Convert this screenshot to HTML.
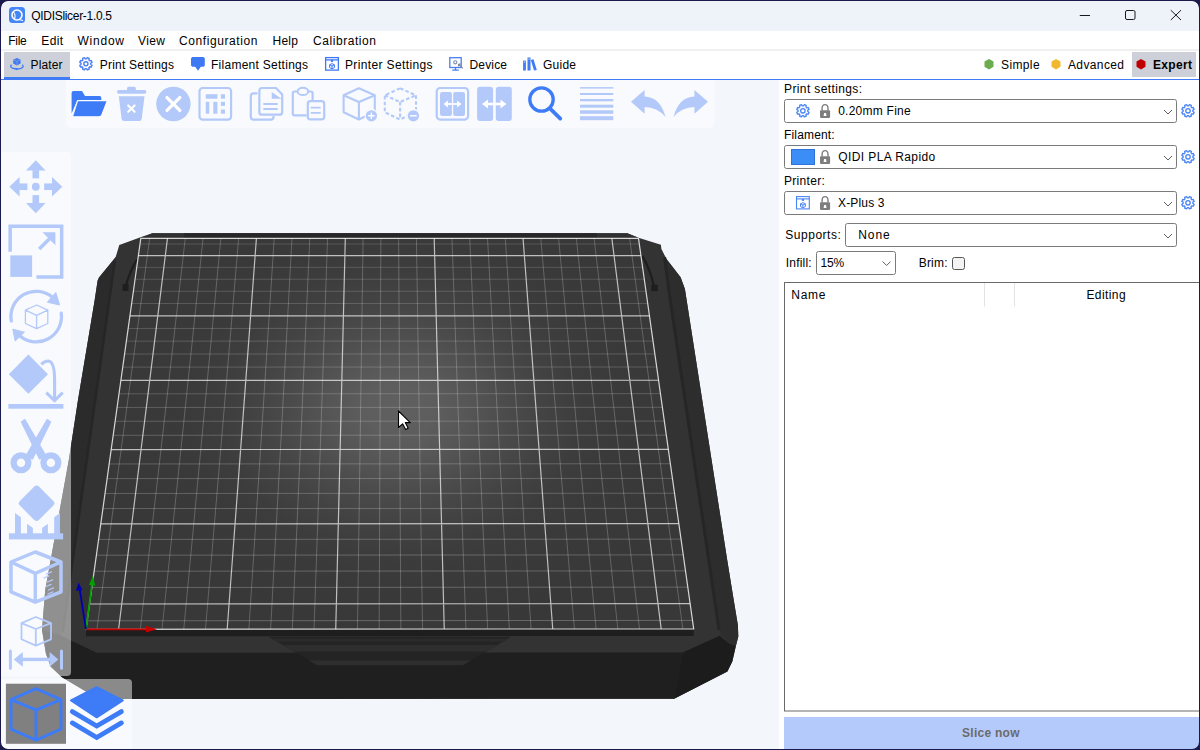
<!DOCTYPE html>
<html><head><meta charset="utf-8"><style>
html,body{margin:0;padding:0;width:1200px;height:750px;overflow:hidden;background:#1b1a4c;}
.win{position:absolute;left:1px;top:1px;width:1198px;height:748px;border-radius:7px;overflow:hidden;background:#fff;}
.abs{position:absolute;}
.t{position:absolute;font-family:"Liberation Sans",sans-serif;line-height:12px;white-space:pre;}
svg{position:absolute;left:0;top:0;}
</style></head><body>
<div class="win">
 <div class="abs" style="left:-1px;top:-1px;width:1200px;height:31px;background:#eef2f9"></div>
 <div class="abs" style="left:-1px;top:30px;width:1200px;height:19px;background:#ffffff"></div>
 <div class="abs" style="left:-1px;top:48px;width:1200px;height:2px;background:#f0f0f0"></div>
 <div class="abs" style="left:-1px;top:51px;width:1200px;height:28px;background:#ffffff"></div>
 <div class="abs" style="left:3px;top:51px;width:66px;height:26px;background:#cdd0d8"></div>
 <div class="abs" style="left:1131px;top:51px;width:64px;height:25px;background:#cdd0d8"></div>
 <div class="abs" style="left:-1px;top:78px;width:1200px;height:1px;background:#3f7cf5"></div>
 <div class="abs" style="left:3px;top:76px;width:66px;height:3px;background:#3f7cf5"></div>
 <div class="abs" style="left:-1px;top:79px;width:779px;height:670px;background:#f3f6fb"></div>
 <div class="abs" style="left:778px;top:79px;width:421px;height:670px;background:#ffffff"></div>
</div>
<svg width="1200" height="750" viewBox="0 0 1200 750">
<defs><radialGradient id="bedg" gradientUnits="userSpaceOnUse" cx="0" cy="0" r="1" gradientTransform="translate(400 410) scale(360 280)"><stop offset="0.0" stop-color="#606060"/><stop offset="0.1" stop-color="#5d5d5d"/><stop offset="0.2" stop-color="#555555"/><stop offset="0.3" stop-color="#4b4b4b"/><stop offset="0.4" stop-color="#434343"/><stop offset="0.5" stop-color="#3d3d3d"/><stop offset="0.6" stop-color="#3a3a3a"/><stop offset="0.7" stop-color="#393939"/><stop offset="0.8" stop-color="#383838"/><stop offset="0.9" stop-color="#383838"/><stop offset="1.0" stop-color="#383838"/></radialGradient><clipPath id="notchclip"><polygon points="268.7,636.8 511.3,636.8 462.3,665.5 317.7,665.5"/></clipPath></defs>
<polygon points="152.4,233.3 627.3,233.3 638.5,237.8 660.9,244.7 661.4,249.0 665.7,258.0 680.6,277.2 684.9,289.0 727.2,560.0 733.7,600.0 737.9,625.2 738.3,636.4 735.8,646.2 732.3,661.6 727.4,671.4 674.2,698.7 98.6,699.0 62.0,677.2 50.8,666.8 46.0,654.0 42.0,630.0 45.2,590.0 68.8,460.0 78.0,400.0 94.7,300.0 97.6,280.8 99.0,277.6 115.6,257.3 119.3,245.0 141.2,237.0" fill="#333333"/>
<polygon points="152.4,233.3 627.3,233.3 638.5,237.8 141.2,237.8" fill="#303030"/><rect x="184" y="233.3" width="413" height="4.5" fill="#272727"/>
<polygon points="115.6,257.3 99.0,277.6 97.6,280.8 94.7,300.0 78.0,400.0 68.8,460.0 45.2,590.0 42.0,630.0 48.0,644.0 60.4,636.0 116.2,257.3" fill="#2b2b2b"/>
<polyline points="114.6,262 62.6,632" stroke="#262626" stroke-width="2.5" fill="none"/>
<polygon points="661.4,249.0 665.7,258.0 680.6,277.2 684.9,289.0 727.2,560.0 733.7,600.0 737.9,625.2 738.3,636.4 735.8,646.2 728.8,643.4 720.4,633.6 707.4,560.0 667.8,290.0 664.6,257.0" fill="#2d2d2d"/>
<polyline points="664.6,257 668.8,290 708.8,560 719,630" stroke="#262626" stroke-width="3" fill="none"/>
<polygon points="42.0,630.0 60.4,635.6 96.7,652.7 682.6,652.5 674.2,698.7 98.6,699.0 62.0,677.2 50.8,666.8 46.0,654.0" fill="#1f1f1f"/>
<polygon points="682.6,652.5 719.7,635.7 728.8,643.4 735.8,646.2 732.3,661.6 727.4,671.4 674.2,698.7" fill="#1c1c1c"/>
<polygon points="268.7,636.8 511.3,636.8 462.3,665.5 317.7,665.5" fill="#242424"/>
<g clip-path="url(#notchclip)"><rect x="260" y="638.7" width="260" height="2.8" fill="#2b2b2b"/><rect x="260" y="645" width="260" height="6.5" fill="#2e2e2e"/><rect x="260" y="660.5" width="260" height="5" fill="#2e2e2e"/></g>
<path d="M137.4,259.4 Q131,268 125.7,286" stroke="#1e1e1e" stroke-width="2.2" fill="none"/><rect x="122.5" y="284" width="6" height="7" fill="#1e1e1e"/>
<path d="M642.2,255.9 Q649.7,268 654,286" stroke="#1e1e1e" stroke-width="2.2" fill="none"/><rect x="651.3" y="284.7" width="6.4" height="6.4" fill="#1e1e1e"/>
<polygon points="86,629.3 693.7,628.9 693.7,636 86,636.2" fill="#1e1e1e"/>
<polygon points="86.0,629.3 693.7,628.9 638.5,238.3 140.8,238.3" fill="url(#bedg)"/>
<path d="M96.86,629.29L149.69,238.30M140.31,629.26L185.27,238.30M162.03,629.25L203.06,238.30M183.75,629.24L220.84,238.30M205.47,629.22L238.63,238.30M248.90,629.19L274.19,238.30M270.61,629.18L291.98,238.30M292.32,629.16L309.76,238.30M314.03,629.15L327.54,238.30M357.45,629.12L363.09,238.30M379.15,629.11L380.87,238.30M400.86,629.09L398.64,238.30M422.56,629.08L416.42,238.30M465.96,629.05L451.96,238.30M487.66,629.04L469.73,238.30M509.35,629.02L487.50,238.30M531.05,629.01L505.27,238.30M574.43,628.98L540.80,238.30M596.12,628.96L558.57,238.30M617.81,628.95L576.33,238.30M639.49,628.94L594.10,238.30M682.86,628.91L629.62,238.30" stroke="#ffffff" stroke-opacity="0.22" stroke-width="1" fill="none"/>
<path d="M87.19,620.81L692.50,620.42" stroke="#fff" stroke-opacity="0.238" stroke-width="1"/><path d="M91.86,587.49L687.80,587.14" stroke="#fff" stroke-opacity="0.232" stroke-width="1"/><path d="M94.14,571.22L685.50,570.89" stroke="#fff" stroke-opacity="0.229" stroke-width="1"/><path d="M96.39,555.20L683.24,554.89" stroke="#fff" stroke-opacity="0.226" stroke-width="1"/><path d="M98.60,539.42L681.01,539.12" stroke="#fff" stroke-opacity="0.222" stroke-width="1"/><path d="M102.92,508.56L676.66,508.30" stroke="#fff" stroke-opacity="0.216" stroke-width="1"/><path d="M105.04,493.47L674.53,493.23" stroke="#fff" stroke-opacity="0.213" stroke-width="1"/><path d="M107.12,478.61L672.43,478.38" stroke="#fff" stroke-opacity="0.209" stroke-width="1"/><path d="M109.17,463.96L670.36,463.75" stroke="#fff" stroke-opacity="0.206" stroke-width="1"/><path d="M113.19,435.30L666.31,435.12" stroke="#fff" stroke-opacity="0.200" stroke-width="1"/><path d="M115.16,421.27L664.33,421.10" stroke="#fff" stroke-opacity="0.197" stroke-width="1"/><path d="M117.09,407.45L662.38,407.29" stroke="#fff" stroke-opacity="0.193" stroke-width="1"/><path d="M119.00,393.82L660.46,393.67" stroke="#fff" stroke-opacity="0.190" stroke-width="1"/><path d="M122.75,367.12L656.69,367.01" stroke="#fff" stroke-opacity="0.184" stroke-width="1"/><path d="M124.58,354.05L654.84,353.95" stroke="#fff" stroke-opacity="0.181" stroke-width="1"/><path d="M126.38,341.16L653.02,341.07" stroke="#fff" stroke-opacity="0.177" stroke-width="1"/><path d="M128.17,328.44L651.23,328.36" stroke="#fff" stroke-opacity="0.174" stroke-width="1"/><path d="M131.66,303.52L647.71,303.46" stroke="#fff" stroke-opacity="0.168" stroke-width="1"/><path d="M133.37,291.30L645.98,291.26" stroke="#fff" stroke-opacity="0.164" stroke-width="1"/><path d="M135.06,279.25L644.28,279.22" stroke="#fff" stroke-opacity="0.161" stroke-width="1"/><path d="M136.73,267.36L642.60,267.33" stroke="#fff" stroke-opacity="0.158" stroke-width="1"/><path d="M140.00,244.04L639.31,244.03" stroke="#fff" stroke-opacity="0.152" stroke-width="1"/>
<path d="M118.59,629.28L167.48,238.30M89.54,604.02L690.13,603.65M227.18,629.21L256.41,238.30M100.78,523.87L678.82,523.59M335.74,629.14L345.31,238.30M111.20,449.53L668.32,449.33M444.26,629.06L434.19,238.30M120.89,380.38L658.56,380.25M552.74,628.99L523.04,238.30M129.93,315.89L649.46,315.82M661.18,628.92L611.86,238.30M138.37,255.62L640.95,255.61" stroke="#ffffff" stroke-opacity="0.68" stroke-width="1.2" fill="none"/>
<polygon points="86.0,629.3 693.7,628.9 638.5,238.3 140.8,238.3" fill="none" stroke="#ffffff" stroke-opacity="0.8" stroke-width="1.2"/>
<line x1="86" y1="629.3" x2="150" y2="629.3" stroke="#c80000" stroke-width="1.8"/><polygon points="146,626 157,629.3 146,632.6" fill="#c80000"/>
<line x1="86" y1="629.3" x2="92" y2="584" stroke="#00a000" stroke-width="1.7"/><polygon points="89,585 93,575.5 95.3,585.8" fill="#00a000"/>
<line x1="86" y1="629.3" x2="79.8" y2="590" stroke="#0000b0" stroke-width="1.8"/><polygon points="76,591 78.5,582.5 82.5,590" fill="#0000b0"/>
<path d="M398.5,411 L398.5,427.5 L402.6,423.8 L405.6,429.6 L408.2,428.3 L405.3,422.6 L410.3,422.6 Z" fill="#fff" stroke="#000" stroke-width="1.1" stroke-linejoin="round"/>
<path d="M66,80 H714.5 V121.5 Q714.5,128 708,128 H72 Q66,128 66,121.5 Z" fill="#ffffff" fill-opacity="0.48"/>
<path d="M0,152 H67 Q71,152 71,156 V672 Q71,676 67,676 H0 Z" fill="#ffffff" fill-opacity="0.48"/>
<path d="M0,679 H128 Q132,679 132,683 V750 H0 Z" fill="#ffffff" fill-opacity="0.48"/>
<path d="M71.6,93 Q71.6,91 73.6,91 H82 L85,96 H99.5 Q101.3,96 101.3,97.8 V100.5 H77.2 L71.6,113.5 Z" fill="#3e7bf6"/>
<path d="M77.6,100.6 H107.3 L101.9,114.6 Q101.2,116.8 99,116.8 H72.4 Z" fill="#3e7bf6" stroke="#fafbfe" stroke-width="1.1"/>
<rect x="127" y="86.7" width="8.8" height="4" rx="1.5" fill="#b3c9f9"/><rect x="117" y="90" width="29.3" height="3.8" rx="1.8" fill="#b3c9f9"/>
<path d="M118.8,96.2 H144.5 L141.7,118.8 Q141.4,121 139.2,121 H124.1 Q121.9,121 121.6,118.8 Z" fill="#b3c9f9"/>
<path d="M128.2,105.4 L134.6,111.8 M134.6,105.4 L128.2,111.8" stroke="#fff" stroke-width="2.1" stroke-linecap="round"/>
<circle cx="173.4" cy="104" r="17.2" fill="#b3c9f9"/>
<path d="M167,97.6 L179.8,110.4 M179.8,97.6 L167,110.4" stroke="#fff" stroke-width="3.3" stroke-linecap="round"/>
<rect x="199.5" y="88" width="31.6" height="31.6" rx="3.2" fill="none" stroke="#b3c9f9" stroke-width="2.2"/>
<rect x="205.75" y="94.25" width="11.65" height="4.45" fill="#b3c9f9"/><rect x="220.9" y="94.25" width="4.1" height="4.45" fill="#b3c9f9"/><rect x="205.75" y="101.8" width="3.5" height="11.9" fill="#b3c9f9"/><rect x="213.3" y="101.8" width="4.1" height="11.9" fill="#b3c9f9"/><rect x="220.9" y="101.8" width="4.1" height="4.1" fill="#b3c9f9"/><rect x="220.9" y="109.5" width="4.1" height="4.2" fill="#b3c9f9"/>
<path d="M257.5,93.4 H253.5 Q250.8,93.4 250.8,96.2 V116.8 Q250.8,119.6 253.5,119.6 H270.8 Q273.5,119.6 273.5,116.8 V116" fill="none" stroke="#b3c9f9" stroke-width="2.2"/>
<path d="M262,88 H276 L282.2,94.4 V111.9 Q282.2,114.7 279.4,114.7 H262 Q259.35,114.7 259.35,111.9 V90.8 Q259.35,88 262,88 Z" fill="none" stroke="#b3c9f9" stroke-width="2.2"/>
<polygon points="271.7,91.9 281.6,98.8 271.7,98.8" fill="#b3c9f9"/>
<path d="M263.3,104 H277.7 M263.3,109 H277.7" stroke="#b3c9f9" stroke-width="1.8"/>
<path d="M307,91.5 H310.9 Q312.6,91.5 312.6,93.3 V100 M306.7,115.3 H294.6 Q292.8,115.3 292.8,113.5 V93.3 Q292.8,91.5 294.6,91.5 H298.5" fill="none" stroke="#b3c9f9" stroke-width="2.2"/>
<ellipse cx="302.9" cy="91.4" rx="5.3" ry="3.6" fill="#f9fafd" stroke="#b3c9f9" stroke-width="2"/>
<rect x="307.8" y="101.1" width="16.4" height="18.3" rx="2.6" fill="#f9fafd" stroke="#b3c9f9" stroke-width="2.2"/>
<path d="M310.75,107.7 H320.7 M310.75,112.9 H320.7" stroke="#b3c9f9" stroke-width="1.8"/>
<path d="M358.9,88.3 L374.8,95.3 V111.8 L358.9,119.5 L343.6,112.3 V95.3 Z" fill="none" stroke="#b3c9f9" stroke-width="2.1" stroke-linejoin="round"/><path d="M343.6,95.3 L358.9,102 L374.8,95.3 M358.9,102 V119" fill="none" stroke="#b3c9f9" stroke-width="2.1"/>
<path d="M400.09999999999997,88.3 L416.0,95.3 V111.8 L400.09999999999997,119.5 L384.8,112.3 V95.3 Z" fill="none" stroke="#b3c9f9" stroke-width="2.1" stroke-linejoin="round" stroke-dasharray="3.6 2.2"/><path d="M384.8,95.3 L400.09999999999997,102 L416.0,95.3 M400.09999999999997,102 V119" fill="none" stroke="#b3c9f9" stroke-width="2.1" stroke-dasharray="3.6 2.2"/>
<circle cx="371.4" cy="115.8" r="6.3" fill="#b3c9f9" stroke="#f9fafd" stroke-width="1.3"/><path d="M368.1,115.8 H374.7 M371.4,112.5 V119.1" stroke="#fff" stroke-width="1.4"/>
<circle cx="413.4" cy="115.8" r="6.3" fill="#b3c9f9" stroke="#f9fafd" stroke-width="1.3"/><path d="M410.1,115.8 H416.7" stroke="#fff" stroke-width="1.4"/>
<rect x="436.7" y="88" width="31.4" height="31.6" rx="3.5" fill="none" stroke="#b3c9f9" stroke-width="2.2"/>
<rect x="440" y="91.9" width="11.9" height="24.1" rx="2.2" fill="#b3c9f9"/><rect x="453.2" y="91.9" width="11.8" height="24.1" rx="2.2" fill="#b3c9f9"/>
<path d="M447.5,104 H457.5" stroke="#fff" stroke-width="1.8"/><polygon points="443.5,104 448.0,100.4 448.0,107.6" fill="#fff"/><polygon points="461.5,104 457.0,100.4 457.0,107.6" fill="#fff"/>
<rect x="477.1" y="86.7" width="16" height="34.3" rx="3" fill="#b3c9f9"/><rect x="495.8" y="86.7" width="16" height="34.3" rx="3" fill="#b3c9f9"/>
<path d="M487.5,104 H501.0" stroke="#fff" stroke-width="2.6"/><polygon points="482,104 488,99.4 488,108.6" fill="#fff"/><polygon points="506.5,104 500.5,99.4 500.5,108.6" fill="#fff"/>
<circle cx="541.5" cy="99.5" r="11.7" fill="none" stroke="#3e7bf6" stroke-width="3.3"/>
<path d="M549.9,108.4 L560.3,118.6" stroke="#3e7bf6" stroke-width="3.7" stroke-linecap="round"/>
<rect x="580" y="87.1" width="33.3" height="1.5" fill="#b3c9f9"/>
<rect x="580" y="93" width="33.3" height="2" fill="#b3c9f9"/>
<rect x="580" y="99" width="33.3" height="2.3" fill="#b3c9f9"/>
<rect x="580" y="104.7" width="33.3" height="3" fill="#b3c9f9"/>
<rect x="580" y="110.3" width="33.3" height="3.5" fill="#b3c9f9"/>
<rect x="580" y="116.2" width="33.3" height="4" fill="#b3c9f9"/>
<path d="M631,101.8 L644.6,90 V96.5 Q660,96.8 665.6,117 Q657,107 644.6,107 V113.8 Z" fill="#b3c9f9"/>
<path d="M708,101.8 L694.4,90 V96.5 Q679,96.8 673.4,117 Q682,107 694.4,107 V113.8 Z" fill="#b3c9f9"/>
<circle cx="35.8" cy="186.75" r="3.9" fill="#b3c9f9"/>
<g transform="rotate(0 35.8 186.75)"><polygon points="35.8,160.25 45.599999999999994,170.55 25.999999999999996,170.55" fill="#b3c9f9"/><rect x="32.5" y="170.15" width="6.6" height="8.2" fill="#b3c9f9"/></g>
<g transform="rotate(90 35.8 186.75)"><polygon points="35.8,160.25 45.599999999999994,170.55 25.999999999999996,170.55" fill="#b3c9f9"/><rect x="32.5" y="170.15" width="6.6" height="8.2" fill="#b3c9f9"/></g>
<g transform="rotate(180 35.8 186.75)"><polygon points="35.8,160.25 45.599999999999994,170.55 25.999999999999996,170.55" fill="#b3c9f9"/><rect x="32.5" y="170.15" width="6.6" height="8.2" fill="#b3c9f9"/></g>
<g transform="rotate(270 35.8 186.75)"><polygon points="35.8,160.25 45.599999999999994,170.55 25.999999999999996,170.55" fill="#b3c9f9"/><rect x="32.5" y="170.15" width="6.6" height="8.2" fill="#b3c9f9"/></g>
<path d="M10.15,251.7 V226.35 H61.65 V276.95 H36.4" fill="none" stroke="#b3c9f9" stroke-width="3.5"/>
<rect x="10.3" y="255.4" width="21.8" height="21.5" fill="#b3c9f9"/>
<path d="M39.2,249 L49.5,238.7" stroke="#b3c9f9" stroke-width="3.6"/><polygon points="42.5,232.3 55.4,232.3 55.4,245.2" fill="#b3c9f9"/>
<path d="M11.28,320.99 A25.3,25.3 0 0 1 52.46,297.22 M61.25,313.08 A25.3,25.3 0 0 1 19.94,335.98" fill="none" stroke="#b3c9f9" stroke-width="3.3" stroke-linecap="round"/>
<polygon points="59.6,305 55.8,292.6 47.4,302.2" fill="#b3c9f9" stroke="#b3c9f9" stroke-width="1" stroke-linejoin="round"/>
<polygon points="12.8,329.2 24.4,332.2 15.2,341" fill="#b3c9f9" stroke="#b3c9f9" stroke-width="1" stroke-linejoin="round"/>
<path d="M36.6,305 L47.8,310.2 V323.5 L36.6,328.7 L25.4,323.5 V310.2 Z M25.4,310.2 L36.6,315.4 L47.8,310.2 M36.6,315.4 V328.7" fill="none" stroke="#b3c9f9" stroke-width="1.3" stroke-linejoin="round"/>
<polygon points="28.4,354.6 48,374.2 28.4,393.8 8.8,374.2" fill="#b3c9f9"/>
<path d="M41.3,364.3 Q44.5,361 48.3,361 Q54.6,361.5 54.6,380 V399" fill="none" stroke="#b3c9f9" stroke-width="3.1"/>
<path d="M46.3,392.6 L54.5,400.6 L62.7,392.6" fill="none" stroke="#b3c9f9" stroke-width="3.1"/>
<rect x="8.4" y="404" width="55" height="4.7" fill="#b3c9f9"/>
<polygon points="21.4,422 24.8,419.6 45.5,455 39.5,459" fill="#b3c9f9" stroke="#b3c9f9" stroke-width="1.2" stroke-linejoin="round"/>
<polygon points="50.6,422 47.2,419.6 26.5,455 32.5,459" fill="#b3c9f9" stroke="#b3c9f9" stroke-width="1.2" stroke-linejoin="round"/>
<circle cx="21" cy="462.7" r="7.4" fill="none" stroke="#b3c9f9" stroke-width="6.3"/><circle cx="50.9" cy="462.7" r="7.4" fill="none" stroke="#b3c9f9" stroke-width="6.3"/>
<rect x="23.2" y="489.9" width="26.8" height="26.8" rx="3.2" transform="rotate(45 36.6 503.3)" fill="#b3c9f9"/>
<rect x="8.9" y="533.3" width="54.2" height="6.1" fill="#b3c9f9"/>
<polygon points="15,512.9 20.9,517.3 20.9,534 15,534" fill="#b3c9f9"/><polygon points="27.1,523.8 32.9,528.1 32.9,534 27.1,534" fill="#b3c9f9"/><polygon points="42.1,528.1 47.9,523.8 47.9,534 42.1,534" fill="#b3c9f9"/><polygon points="54.2,517.3 60,512.9 60,534 54.2,534" fill="#b3c9f9"/>
<path d="M35.3,552 L61,562 V591.8 L35.3,602.2 L11,591.8 V562 Z M11,562 L35.3,573.3 L61,562 M35.3,573.3 V602" fill="none" stroke="#b3c9f9" stroke-width="3.5" stroke-linejoin="round"/>
<path d="M46.5,574 l5,-2.2" stroke="#b3c9f9" stroke-width="1.3" stroke-linecap="round"/>
<path d="M44,578 l5,-2.2" stroke="#b3c9f9" stroke-width="1.3" stroke-linecap="round"/>
<path d="M47.5,582 l5,-2.2" stroke="#b3c9f9" stroke-width="1.3" stroke-linecap="round"/>
<path d="M46,586.5 l5,-2.2" stroke="#b3c9f9" stroke-width="1.3" stroke-linecap="round"/>
<path d="M48.5,590 l5,-2.2" stroke="#b3c9f9" stroke-width="1.3" stroke-linecap="round"/>
<path d="M48,594 l5,-2.2" stroke="#b3c9f9" stroke-width="1.3" stroke-linecap="round"/>
<path d="M35.8,617 L51,623.2 V639.3 L35.8,645.6 L21.5,639.3 V623.2 Z M21.5,623.2 L35.8,629 L51,623.2 M35.8,629 V645.6" fill="none" stroke="#b3c9f9" stroke-width="1.8" stroke-linejoin="round"/>
<path d="M10.4,650.9 V668.3 M61.5,650.9 V668.3" stroke="#b3c9f9" stroke-width="3" stroke-linecap="round"/>
<path d="M22,659.4 H50" stroke="#b3c9f9" stroke-width="3.4"/><polygon points="13.7,659.4 22.8,652 22.8,666.8" fill="#b3c9f9"/><polygon points="58.3,659.4 49.6,652 49.6,666.8" fill="#b3c9f9"/>
<rect x="5.9" y="683.7" width="60.1" height="60.1" fill="#808080"/>
<path d="M36,688.6 L61,699.6 V729.2 L36,740.2 L11,729.2 V699.6 Z M11,699.6 L36,710 L61,699.6 M36,710 V740" fill="none" stroke="#3e7bf6" stroke-width="3" stroke-linejoin="round"/>
<polygon points="71,700.3 96.7,687.2 122.8,700.3 96.7,717.3" fill="#3e7bf6" stroke="#3e7bf6" stroke-width="2" stroke-linejoin="round"/>
<path d="M72.3,711.6 L96.7,726 L121.4,711.6 M72.3,722.9 L96.7,737.5 L121.4,722.9" fill="none" stroke="#3e7bf6" stroke-width="4.8" stroke-linecap="round" stroke-linejoin="miter"/>
<rect x="9" y="7" width="16" height="16" rx="3.5" fill="#4486f6"/>
<circle cx="17" cy="15" r="5" fill="none" stroke="#fff" stroke-width="1.6"/><path d="M13.5,12 Q16,15 14.5,19 M19,19.5 L23,20.5" fill="none" stroke="#fff" stroke-width="1.1"/>
<path d="M1079.75,15.5 H1090" stroke="#1a1a1a" stroke-width="1"/>
<rect x="1125.5" y="10.5" width="9.5" height="9" rx="1.5" fill="none" stroke="#1a1a1a" stroke-width="1"/>
<path d="M1170.8,10.2 L1181,20 M1181,10.2 L1170.8,20" stroke="#1a1a1a" stroke-width="1"/>
<path d="M16.9,58 L20.6,59.7 V63.6 L16.9,65.4 L13.2,63.6 V59.7 Z" fill="#3e7bf5"/><path d="M13.2,59.7 L16.9,61.4 L20.6,59.7 M16.9,61.4 V65.4" stroke="#9aa9c8" stroke-width="0.6" fill="none"/>
<path d="M11.6,64.8 Q9.3,66.8 12.5,68.2 Q16.5,69.8 21,68.3 Q24.5,66.8 22.3,64.8" fill="none" stroke="#3e7bf5" stroke-width="1.3"/><polygon points="15,67.8 18,68.6 16.5,70.6" fill="#3e7bf5"/>
<path d="M90.76,64.44 L92.04,65.22 L91.24,67.14 L89.79,66.78 L88.88,67.69 L89.24,69.14 L87.32,69.94 L86.54,68.66 L85.26,68.66 L84.48,69.94 L82.56,69.14 L82.92,67.69 L82.01,66.78 L80.56,67.14 L79.76,65.22 L81.04,64.44 L81.04,63.16 L79.76,62.38 L80.56,60.46 L82.01,60.82 L82.92,59.91 L82.56,58.46 L84.48,57.66 L85.26,58.94 L86.54,58.94 L87.32,57.66 L89.24,58.46 L88.88,59.91 L89.79,60.82 L91.24,60.46 L92.04,62.38 L90.76,63.16Z" fill="none" stroke="#4a7ef2" stroke-width="1.35" stroke-linejoin="round"/><circle cx="85.9" cy="63.8" r="2.1" fill="none" stroke="#4a7ef2" stroke-width="1.35"/>
<path d="M192.3,57 H203.5 L204.8,58.3 V65.4 L203.5,66.7 H200.8 L198,70.7 L195.2,66.7 H192.3 L191,65.4 V58.3 Z" fill="#3f78f5"/>
<rect x="325.6" y="57.6" width="12.8" height="12.5" fill="none" stroke="#3f78f5" stroke-width="1.3"/><path d="M325.6,59.9 H338.4" stroke="#3f78f5" stroke-width="1.3"/><rect x="330.9" y="59.9" width="2.2" height="2" fill="#3f78f5"/><path d="M332.0,63.6 L334.4,64.8 V67.6 L332.0,68.8 L329.6,67.6 V64.8 Z M329.6,64.8 L332.0,66 L334.4,64.8 M332.0,66 V68.8" fill="none" stroke="#3f78f5" stroke-width="1"/>
<rect x="449.8" y="57.7" width="11.4" height="9.8" fill="none" stroke="#4a7ef2" stroke-width="1.3"/><path d="M455.5,67.5 V69.8 M452.2,70.2 H458.8" stroke="#4a7ef2" stroke-width="1.3"/><circle cx="455.3" cy="62.3" r="1.6" fill="none" stroke="#7a8aa8" stroke-width="1.1"/><path d="M458.5,64 L462.8,68.3 M458.5,64 H461 M458.5,64 V66.5" stroke="#7a8aa8" stroke-width="1.1"/>
<rect x="523.1" y="60.6" width="2.8" height="9.9" fill="#3e7bf5"/><rect x="527.5" y="57.5" width="3" height="13" fill="#3e7bf5"/><polygon points="530.8,60 533.5,59.3 536.8,70 534,70.6" fill="#3e7bf5"/><circle cx="524.5" cy="62" r="0.6" fill="#fff"/><circle cx="529" cy="59" r="0.6" fill="#fff"/>
<polygon points="989.00,69.40 984.50,66.80 984.50,61.60 989.00,59.00 993.50,61.60 993.50,66.80" fill="#6aac4e"/>
<polygon points="1056.00,69.40 1051.50,66.80 1051.50,61.60 1056.00,59.00 1060.50,61.60 1060.50,66.80" fill="#f1b72e"/>
<polygon points="1141.00,69.40 1136.50,66.80 1136.50,61.60 1141.00,59.00 1145.50,61.60 1145.50,66.80" fill="#c00000"/>
<rect x="784.5" y="99.5" width="392" height="23" rx="2" fill="#fff" stroke="#7a7a7a" stroke-width="1"/>
<path d="M1164,110.0 L1168,114.0 L1172,110.0" fill="none" stroke="#606060" stroke-width="1"/>
<path d="M1192.86,111.44 L1194.14,112.22 L1193.34,114.14 L1191.89,113.78 L1190.98,114.69 L1191.34,116.14 L1189.42,116.94 L1188.64,115.66 L1187.36,115.66 L1186.58,116.94 L1184.66,116.14 L1185.02,114.69 L1184.11,113.78 L1182.66,114.14 L1181.86,112.22 L1183.14,111.44 L1183.14,110.16 L1181.86,109.38 L1182.66,107.46 L1184.11,107.82 L1185.02,106.91 L1184.66,105.46 L1186.58,104.66 L1187.36,105.94 L1188.64,105.94 L1189.42,104.66 L1191.34,105.46 L1190.98,106.91 L1191.89,107.82 L1193.34,107.46 L1194.14,109.38 L1192.86,110.16Z" fill="none" stroke="#4a84f5" stroke-width="1.3" stroke-linejoin="round"/><circle cx="1188" cy="110.8" r="2.2" fill="none" stroke="#4a84f5" stroke-width="1.3"/>
<path d="M822.1,110.5 V108.5 Q822.1,104.60000000000001 825.05,104.60000000000001 Q828,104.60000000000001 828,108.5 V110.5" fill="none" stroke="#7d7d7d" stroke-width="1.4"/><rect x="820" y="110.30000000000001" width="10.1" height="7.6" rx="0.8" fill="#7d7d7d"/><path d="M824.1,112.9 H826 L826.5,116.10000000000001 H823.6 Z" fill="#fff"/>
<rect x="784.5" y="145.5" width="392" height="23" rx="2" fill="#fff" stroke="#7a7a7a" stroke-width="1"/>
<path d="M1164,156.0 L1168,160.0 L1172,156.0" fill="none" stroke="#606060" stroke-width="1"/>
<path d="M1192.86,157.44 L1194.14,158.22 L1193.34,160.14 L1191.89,159.78 L1190.98,160.69 L1191.34,162.14 L1189.42,162.94 L1188.64,161.66 L1187.36,161.66 L1186.58,162.94 L1184.66,162.14 L1185.02,160.69 L1184.11,159.78 L1182.66,160.14 L1181.86,158.22 L1183.14,157.44 L1183.14,156.16 L1181.86,155.38 L1182.66,153.46 L1184.11,153.82 L1185.02,152.91 L1184.66,151.46 L1186.58,150.66 L1187.36,151.94 L1188.64,151.94 L1189.42,150.66 L1191.34,151.46 L1190.98,152.91 L1191.89,153.82 L1193.34,153.46 L1194.14,155.38 L1192.86,156.16Z" fill="none" stroke="#4a84f5" stroke-width="1.3" stroke-linejoin="round"/><circle cx="1188" cy="156.8" r="2.2" fill="none" stroke="#4a84f5" stroke-width="1.3"/>
<path d="M822.1,156.5 V154.5 Q822.1,150.6 825.05,150.6 Q828,150.6 828,154.5 V156.5" fill="none" stroke="#7d7d7d" stroke-width="1.4"/><rect x="820" y="156.3" width="10.1" height="7.6" rx="0.8" fill="#7d7d7d"/><path d="M824.1,158.9 H826 L826.5,162.1 H823.6 Z" fill="#fff"/>
<rect x="784.5" y="191.5" width="392" height="23" rx="2" fill="#fff" stroke="#7a7a7a" stroke-width="1"/>
<path d="M1164,202.0 L1168,206.0 L1172,202.0" fill="none" stroke="#606060" stroke-width="1"/>
<path d="M1192.86,203.44 L1194.14,204.22 L1193.34,206.14 L1191.89,205.78 L1190.98,206.69 L1191.34,208.14 L1189.42,208.94 L1188.64,207.66 L1187.36,207.66 L1186.58,208.94 L1184.66,208.14 L1185.02,206.69 L1184.11,205.78 L1182.66,206.14 L1181.86,204.22 L1183.14,203.44 L1183.14,202.16 L1181.86,201.38 L1182.66,199.46 L1184.11,199.82 L1185.02,198.91 L1184.66,197.46 L1186.58,196.66 L1187.36,197.94 L1188.64,197.94 L1189.42,196.66 L1191.34,197.46 L1190.98,198.91 L1191.89,199.82 L1193.34,199.46 L1194.14,201.38 L1192.86,202.16Z" fill="none" stroke="#4a84f5" stroke-width="1.3" stroke-linejoin="round"/><circle cx="1188" cy="202.8" r="2.2" fill="none" stroke="#4a84f5" stroke-width="1.3"/>
<path d="M822.1,202.5 V200.5 Q822.1,196.6 825.05,196.6 Q828,196.6 828,200.5 V202.5" fill="none" stroke="#7d7d7d" stroke-width="1.4"/><rect x="820" y="202.3" width="10.1" height="7.6" rx="0.8" fill="#7d7d7d"/><path d="M824.1,204.9 H826 L826.5,208.1 H823.6 Z" fill="#fff"/>
<path d="M807.76,111.44 L809.04,112.22 L808.24,114.14 L806.79,113.78 L805.88,114.69 L806.24,116.14 L804.32,116.94 L803.54,115.66 L802.26,115.66 L801.48,116.94 L799.56,116.14 L799.92,114.69 L799.01,113.78 L797.56,114.14 L796.76,112.22 L798.04,111.44 L798.04,110.16 L796.76,109.38 L797.56,107.46 L799.01,107.82 L799.92,106.91 L799.56,105.46 L801.48,104.66 L802.26,105.94 L803.54,105.94 L804.32,104.66 L806.24,105.46 L805.88,106.91 L806.79,107.82 L808.24,107.46 L809.04,109.38 L807.76,110.16Z" fill="none" stroke="#4a84f5" stroke-width="1.3" stroke-linejoin="round"/><circle cx="802.9" cy="110.8" r="2.2" fill="none" stroke="#4a84f5" stroke-width="1.3"/>
<rect x="791.5" y="149.5" width="23" height="15" fill="#3a8ef6" stroke="#2f73d6" stroke-width="1"/>
<rect x="796.5" y="196.6" width="12.8" height="12.3" fill="none" stroke="#4a84f5" stroke-width="1.1"/><path d="M796.5,198.9 H809.3" stroke="#4a84f5" stroke-width="1.1"/><rect x="801.8" y="198.9" width="2.2" height="2" fill="#4a84f5"/><path d="M802.9,202.6 L805.3,203.8 V206.6 L802.9,207.8 L800.5,206.6 V203.8 Z M800.5,203.8 L802.9,205 L805.3,203.8 M802.9,205 V207.8" fill="none" stroke="#4a84f5" stroke-width="1"/>
<rect x="845.5" y="223.5" width="331" height="23" rx="2" fill="#fff" stroke="#7a7a7a" stroke-width="1"/><path d="M1164,234 L1168,238 L1172,234" fill="none" stroke="#606060" stroke-width="1"/>
<rect x="816.5" y="251.5" width="79" height="23" rx="2" fill="#fff" stroke="#7a7a7a" stroke-width="1"/><path d="M882.6,261.5 L886.6,265.5 L890.6,261.5" fill="none" stroke="#606060" stroke-width="1"/>
<rect x="952.5" y="257.5" width="12" height="12" rx="2" fill="#f3f3f3" stroke="#555" stroke-width="1"/>
<rect x="784.5" y="282.5" width="420" height="428.5" fill="#fff" stroke="#6a6a6a" stroke-width="1"/>
<path d="M984.5,283 V306.5 M1014.5,283 V306.5" stroke="#e3e3e3" stroke-width="1"/>
<rect x="784" y="717" width="416" height="33" fill="#b4cafa"/>
</svg>
<span class="t" style="left:31.25px;top:9.75px;font-size:12px;letter-spacing:-0.307px;color:#000;">QIDISlicer-1.0.5</span><span class="t" style="left:8.30px;top:35.00px;font-size:12px;letter-spacing:-0.317px;color:#000;">File</span><span class="t" style="left:41.30px;top:35.00px;font-size:12px;letter-spacing:0.333px;color:#000;">Edit</span><span class="t" style="left:77.50px;top:35.00px;font-size:12px;letter-spacing:0.760px;color:#000;">Window</span><span class="t" style="left:138.00px;top:35.00px;font-size:12px;letter-spacing:0.383px;color:#000;">View</span><span class="t" style="left:179.00px;top:35.00px;font-size:12px;letter-spacing:0.592px;color:#000;">Configuration</span><span class="t" style="left:272.50px;top:35.00px;font-size:12px;letter-spacing:0.267px;color:#000;">Help</span><span class="t" style="left:313.00px;top:35.00px;font-size:12px;letter-spacing:0.565px;color:#000;">Calibration</span><span class="t" style="left:30.50px;top:58.70px;font-size:12px;letter-spacing:0.130px;color:#000;">Plater</span><span class="t" style="left:99.70px;top:58.70px;font-size:12px;letter-spacing:0.227px;color:#000;">Print Settings</span><span class="t" style="left:211.00px;top:58.70px;font-size:12px;letter-spacing:0.269px;color:#000;">Filament Settings</span><span class="t" style="left:345.00px;top:58.70px;font-size:12px;letter-spacing:0.363px;color:#000;">Printer Settings</span><span class="t" style="left:469.50px;top:58.70px;font-size:12px;letter-spacing:0.160px;color:#000;">Device</span><span class="t" style="left:543.00px;top:58.70px;font-size:12px;letter-spacing:0.250px;color:#000;">Guide</span><span class="t" style="left:1001.00px;top:58.70px;font-size:12px;letter-spacing:0.380px;color:#000;">Simple</span><span class="t" style="left:1068.00px;top:58.70px;font-size:12px;letter-spacing:0.371px;color:#000;">Advanced</span><span class="t" style="left:1153.00px;top:58.70px;font-size:12px;letter-spacing:0.330px;color:#000;font-weight:bold;">Expert</span><span class="t" style="left:784.10px;top:83.00px;font-size:12px;letter-spacing:0.371px;color:#000;">Print settings:</span><span class="t" style="left:838.20px;top:105.10px;font-size:12px;letter-spacing:0.245px;color:#000;">0.20mm Fine</span><span class="t" style="left:784.00px;top:129.40px;font-size:12px;letter-spacing:0.169px;color:#000;">Filament:</span><span class="t" style="left:838.20px;top:150.80px;font-size:12px;letter-spacing:0.407px;color:#000;">QIDI PLA Rapido</span><span class="t" style="left:784.00px;top:175.10px;font-size:12px;letter-spacing:0.300px;color:#000;">Printer:</span><span class="t" style="left:838.00px;top:196.90px;font-size:12px;letter-spacing:0.164px;color:#000;">X-Plus 3</span><span class="t" style="left:785.30px;top:229.20px;font-size:12px;letter-spacing:0.519px;color:#000;">Supports:</span><span class="t" style="left:858.30px;top:229.20px;font-size:12px;letter-spacing:0.900px;color:#000;">None</span><span class="t" style="left:785.80px;top:256.70px;font-size:12px;letter-spacing:0.200px;color:#000;">Infill:</span><span class="t" style="left:820.50px;top:256.70px;font-size:12px;letter-spacing:-0.150px;color:#000;">15%</span><span class="t" style="left:918.70px;top:256.70px;font-size:12px;letter-spacing:0.200px;color:#000;">Brim:</span><span class="t" style="left:791.30px;top:289.00px;font-size:12px;letter-spacing:0.667px;color:#000;">Name</span><span class="t" style="left:1086.40px;top:289.00px;font-size:12px;letter-spacing:0.417px;color:#000;">Editing</span><span class="t" style="left:962.00px;top:726.80px;font-size:12px;letter-spacing:0.275px;color:#6b6b6b;font-weight:bold;">Slice now</span>
<div style="position:absolute;left:1px;top:1px;width:1198px;height:748px;border-radius:7px;box-shadow:0 0 0 30px #1b1a4c;"></div>
</body></html>
